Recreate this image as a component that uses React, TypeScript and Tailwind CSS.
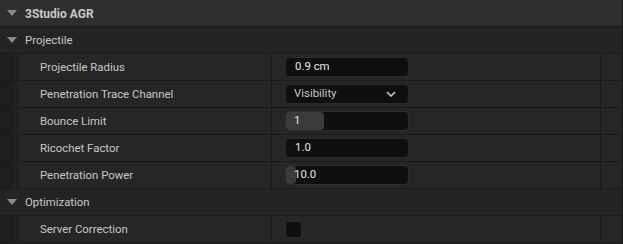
import React from "react";

const font = { fontFamily: "Roboto, 'Noto Sans', sans-serif" };

function Tri() {
  return (
    <svg width="10" height="7" viewBox="0 0 10 7" className="shrink-0">
      <path d="M0 0 L10 0 L5 6 Z" fill="#8a8a8a" />
    </svg>
  );
}

function Category({ label, bold, header }: { label: string; bold?: boolean; header?: boolean }) {
  return (
    <div
      className={`flex h-[27px] items-center gap-[8px] border-b border-[#1a1a1a] pl-[7px] pt-[1px] ${
        header ? "bg-[#2f2f2f]" : "bg-[#242424]"
      }`}
    >
      <Tri />
      <span className={`text-[#c8c8c8] ${bold ? "text-[12px] font-bold" : "text-[11.4px]"}`}>{label}</span>
    </div>
  );
}

function Prop({ label, children }: { label: string; children: React.ReactNode }) {
  return (
    <div className="flex h-[27px] border-b border-[#1a1a1a] bg-[#262626]">
      <div className="w-[13px] bg-[#1e1e1e]" />
      <div className="w-[4px] bg-[#232323]" />
      <div className="w-[1px] bg-[#181818]" />
      <div className="flex w-[253px] items-center pl-[22px] pt-[1px] text-[11.4px] text-[#c8c8c8]">{label}</div>
      <div className="flex flex-1 items-center border-l border-[#1a1a1a] pl-[13px]">{children}</div>
      <div className="w-[22px] border-l border-[#1a1a1a]" />
    </div>
  );
}

function Input({ value }: { value: string }) {
  return (
    <div className="flex h-[20px] w-[124px] items-center rounded-[4px] border border-[#2a2a2a] bg-[#0f0f0f] pl-[9px] text-[11.4px] text-[#e6e6e6]">
      {value}
    </div>
  );
}

function Slider({ value, fill }: { value: string; fill: number }) {
  return (
    <div className="relative flex h-[20px] w-[124px] items-center rounded-[4px] border border-[#2e2e2e] bg-[#0f0f0f] text-[11.4px] text-[#e6e6e6]">
      <div
        className="absolute left-0 top-0 h-full rounded-[4px] bg-[#3b3b3b]"
        style={{ width: fill }}
      />
      <span className="relative pl-[8px]">{value}</span>
    </div>
  );
}

export default function App() {
  return (
    <div
      className="h-[244px] w-[623px] overflow-hidden border-r border-[#141414] bg-[#242424]"
      style={font}
    >
      <Category label="3Studio AGR" bold header />
      <Category label="Projectile" />
      <Prop label="Projectile Radius">
        <Input value="0.9 cm" />
      </Prop>
      <Prop label="Penetration Trace Channel">
        <div className="flex h-[20px] w-[124px] items-center justify-between rounded-[4px] border border-[#2a2a2a] bg-[#0f0f0f] pl-[8px] pr-[12px] text-[11.4px] text-[#c8c8c8]">
          <span>Visibility</span>
          <svg width="10" height="6" viewBox="0 0 10 6">
            <path d="M1 1 L5 5 L9 1" stroke="#c8c8c8" strokeWidth="1.6" fill="none" />
          </svg>
        </div>
      </Prop>
      <Prop label="Bounce Limit">
        <Slider value="1" fill={38} />
      </Prop>
      <Prop label="Ricochet Factor">
        <Input value="1.0" />
      </Prop>
      <Prop label="Penetration Power">
        <Slider value="10.0" fill={10} />
      </Prop>
      <Category label="Optimization" />
      <Prop label="Server Correction">
        <div className="h-[17px] w-[17px] rounded-[3px] border border-[#2e2e2e] bg-[#0f0f0f]" />
      </Prop>
    </div>
  );
}
